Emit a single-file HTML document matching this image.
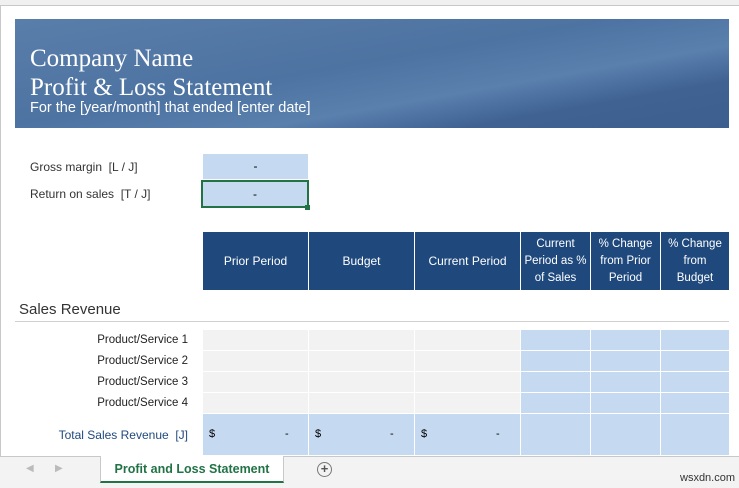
<!DOCTYPE html>
<html><head><style>
*{margin:0;padding:0;box-sizing:border-box}
body{width:739px;height:488px;overflow:hidden;background:#fff;font-family:"Liberation Sans",sans-serif;position:relative}
.a{position:absolute}
.c{position:absolute;font-size:12px;color:#fff;background:#1f497d;text-align:center;display:flex;align-items:center;justify-content:center;line-height:17px}
.g{position:absolute;background:#f2f2f2;height:20px}
.b{position:absolute;background:#c5d9f1;height:20px}
.lbl{position:absolute;right:551px;font-size:11px;color:#222;width:150px;text-align:right}
</style></head><body>
<div class="a" style="left:0;top:0;width:739px;height:6px;background:#f0f0f0;border-bottom:1px solid #c8c8c8"></div>
<div class="a" style="left:0;top:6px;width:1px;height:450px;background:#c8c8c8"></div>
<div class="a" style="left:15px;top:19px;width:714px;height:109px;background:linear-gradient(170deg,#5a7eaa 0%,#4d73a2 45%,#5a80ae 65%,#3f6293 80%,#3d5f8f 100%)"></div>
<div class="a" style="left:30px;top:44px;font-family:'Liberation Serif',serif;font-size:25px;color:#fff;line-height:29px">Company Name<br>Profit &amp; Loss Statement</div>
<div class="a" style="left:30px;top:100px;font-size:14.5px;color:#fff">For the [year/month] that ended [enter date]</div>
<div class="a" style="left:30px;top:160px;font-size:12px;color:#333">Gross margin&nbsp; [L / J]</div>
<div class="a" style="left:30px;top:187px;font-size:12px;color:#333">Return on sales&nbsp; [T / J]</div>
<div class="a" style="left:203px;top:154px;width:105px;height:25px;background:#c5d9f1;text-align:center;font-size:12px;line-height:25px">-</div>
<div class="a" style="left:201px;top:180px;width:108px;height:28px;background:#c5d9f1;border:2px solid #217346;text-align:center;font-size:12px;line-height:24px">-</div>
<div class="a" style="left:305px;top:205px;width:5px;height:5px;background:#217346"></div>
<div class="c" style="left:203px;top:232px;width:105px;height:58px">Prior Period</div>
<div class="c" style="left:309px;top:232px;width:105px;height:58px">Budget</div>
<div class="c" style="left:415px;top:232px;width:105px;height:58px">Current Period</div>
<div class="c" style="left:521px;top:232px;width:69px;height:58px;font-size:11.5px">Current<br>Period as %<br>of Sales</div>
<div class="c" style="left:591px;top:232px;width:69px;height:58px;font-size:11.5px">% Change<br>from Prior<br>Period</div>
<div class="c" style="left:661px;top:232px;width:68px;height:58px;font-size:11.5px">% Change<br>from<br>Budget</div>
<div class="a" style="left:19px;top:301px;font-size:15px;color:#333">Sales Revenue</div>
<div class="a" style="left:15px;top:321px;width:714px;height:1px;background:#d0d0d0"></div>
<div class="g" style="left:203px;top:330px;width:105px"></div><div class="g" style="left:309px;top:330px;width:105px"></div><div class="g" style="left:415px;top:330px;width:105px"></div><div class="b" style="left:521px;top:330px;width:69px"></div><div class="b" style="left:591px;top:330px;width:69px"></div><div class="b" style="left:661px;top:330px;width:68px"></div>
<div class="g" style="left:203px;top:351px;width:105px"></div><div class="g" style="left:309px;top:351px;width:105px"></div><div class="g" style="left:415px;top:351px;width:105px"></div><div class="b" style="left:521px;top:351px;width:69px"></div><div class="b" style="left:591px;top:351px;width:69px"></div><div class="b" style="left:661px;top:351px;width:68px"></div>
<div class="g" style="left:203px;top:372px;width:105px"></div><div class="g" style="left:309px;top:372px;width:105px"></div><div class="g" style="left:415px;top:372px;width:105px"></div><div class="b" style="left:521px;top:372px;width:69px"></div><div class="b" style="left:591px;top:372px;width:69px"></div><div class="b" style="left:661px;top:372px;width:68px"></div>
<div class="g" style="left:203px;top:393px;width:105px"></div><div class="g" style="left:309px;top:393px;width:105px"></div><div class="g" style="left:415px;top:393px;width:105px"></div><div class="b" style="left:521px;top:393px;width:69px"></div><div class="b" style="left:591px;top:393px;width:69px"></div><div class="b" style="left:661px;top:393px;width:68px"></div>
<div class="b" style="left:203px;top:414px;width:105px;height:41px"></div><div class="b" style="left:309px;top:414px;width:105px;height:41px"></div><div class="b" style="left:415px;top:414px;width:105px;height:41px"></div><div class="b" style="left:521px;top:414px;width:69px;height:41px"></div><div class="b" style="left:591px;top:414px;width:69px;height:41px"></div><div class="b" style="left:661px;top:414px;width:68px;height:41px"></div>
<div class="lbl" style="top:334px;font-size:11.5px">Product/Service 1</div>
<div class="lbl" style="top:355px;font-size:11.5px">Product/Service 2</div>
<div class="lbl" style="top:376px;font-size:11.5px">Product/Service 3</div>
<div class="lbl" style="top:397px;font-size:11.5px">Product/Service 4</div>
<div class="lbl" style="top:428px;font-size:12px;color:#1f497d">Total Sales Revenue&nbsp; [J]</div>
<div class="a" style="left:209px;top:428px;font-size:11px">$</div><div class="a" style="left:285px;top:428px;font-size:11px">-</div>
<div class="a" style="left:315px;top:428px;font-size:11px">$</div><div class="a" style="left:390px;top:428px;font-size:11px">-</div>
<div class="a" style="left:421px;top:428px;font-size:11px">$</div><div class="a" style="left:496px;top:428px;font-size:11px">-</div>
<div class="a" style="left:0;top:456px;width:739px;height:32px;background:#f3f3f3;border-top:1px solid #c8c8c8"></div>
<div class="a" style="left:26px;top:463px;font-size:10px;color:#bbb">◀</div>
<div class="a" style="left:55px;top:463px;font-size:10px;color:#bbb">▶</div>
<div class="a" style="left:100px;top:456px;width:184px;height:27px;background:#fff;border-bottom:2px solid #217346;border-left:1px solid #c8c8c8;border-right:1px solid #c8c8c8;text-align:center;font-size:12.5px;font-weight:bold;color:#217346;line-height:27px">Profit and Loss Statement</div>
<div class="a" style="left:317px;top:462px;width:15px;height:15px;border:1.5px solid #777;border-radius:50%;text-align:center;font-size:13px;line-height:12px;color:#555;font-weight:bold">+</div>
<div class="a" style="left:680px;top:472px;font-size:11px;color:#333">wsxdn.com</div>
</body></html>
